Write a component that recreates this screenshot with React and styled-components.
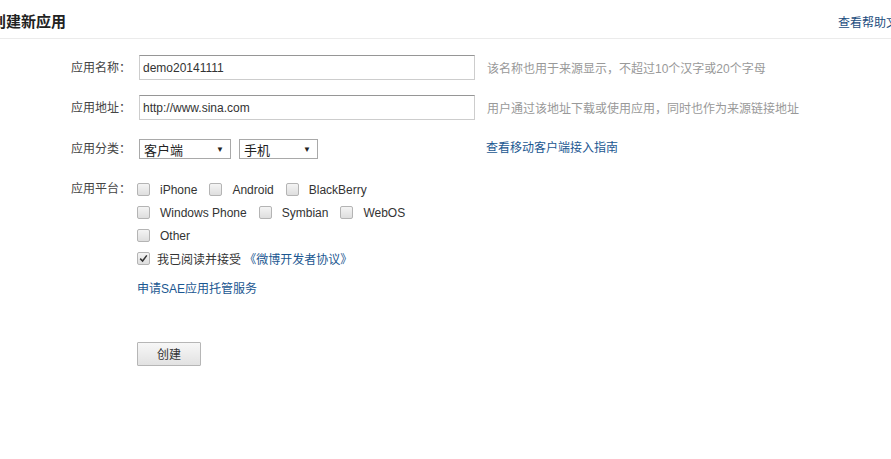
import React from "react";
import styled, { createGlobalStyle } from "styled-components";

const GlobalStyle = createGlobalStyle`
    html, body {
        margin: 0;
        padding: 0;
        background: #fff;
        overflow: hidden;
    }
    body {
        font-family: "Liberation Sans", Arial, "Noto Sans CJK SC", sans-serif;
        font-size: 12px;
        color: #333;
    }
`

const Page = styled.div`
    width: 891px;
    height: 459px;
    overflow: hidden;
`

const Header = styled.div`
    display: flex;
    justify-content: space-between;
    align-items: center;
    height: 38px;
    border-bottom: 1px solid #ebebeb;
    margin-left: -9px;
    margin-right: -19px;
`

const Title = styled.h2`
    margin: 0;
    font-size: 15px;
    line-height: 20px;
    font-weight: bold;
    color: #222;
    padding-top: 5px;
`

const HelpLink = styled.a`
    font-size: 12px;
    line-height: 16px;
    color: #1c4d7e;
    text-decoration: none;
    padding-top: 8px;
`

const Form = styled.div`
    display: flex;
    flex-direction: column;
    padding-left: 71px;
    padding-top: 16px;
`

const Field = styled.div`
    display: flex;
    align-items: ${props => (props.$top ? "flex-start" : "center")};
    margin-top: ${props => props.$gap || 0}px;
    height: ${props => props.$height || "auto"};
`

const Label = styled.div`
    width: 60px;
    margin-right: 6px;
    line-height: ${props => props.$lh || 16}px;
    color: #444;
    white-space: nowrap;
`

const Control = styled.div`
    display: flex;
    align-items: center;
`

const TextInput = styled.div`
    box-sizing: border-box;
    width: 336px;
    height: 25px;
    margin-left: 2px;
    padding-left: 3px;
    display: flex;
    align-items: center;
    border: 1px solid #cdcdcd;
    border-top-color: #969696;
    background: #fff;
    color: #333;
    font-size: 12px;
`

const Hint = styled.span`
    margin-left: 12px;
    color: #999;
    font-size: 12px;
    white-space: nowrap;
`

const Link = styled.a`
    color: #1b5791;
    text-decoration: none;
    white-space: nowrap;
    margin-left: ${props => props.$ml || 0}px;
    margin-top: ${props => props.$mt || 0}px;
`

const SelectBox = styled.div`
    box-sizing: border-box;
    width: ${props => props.$w}px;
    height: 20px;
    margin-left: ${props => props.$ml}px;
    padding: 0 6px 0 4px;
    display: flex;
    align-items: center;
    justify-content: space-between;
    border: 1px solid #a9a9a9;
    background: #fff;
    font-size: 13px;
    color: #222;
    span {
        font-size: 8px;
        color: #222;
    }
`

const CheckGroup = styled.div`
    display: flex;
    flex-direction: column;
`

const CheckLine = styled.div`
    display: flex;
    align-items: center;
    height: 23px;
    margin-top: ${props => props.$gap || 0}px;
`

const Box = styled.span`
    box-sizing: border-box;
    width: 13px;
    height: 13px;
    flex: none;
    border: 1px solid #b4b4b4;
    border-radius: 2px;
    background: linear-gradient(#f4f4f4, #dedede);
    margin-right: ${props => props.$mr || 10}px;
    display: flex;
    align-items: center;
    justify-content: center;
`

const CheckText = styled.span`
    margin-right: 12px;
    color: #333;
    white-space: nowrap;
`

const Button = styled.button`
    box-sizing: border-box;
    width: 64px;
    height: 24px;
    border: 1px solid #b6b6b6;
    border-radius: 1px;
    background: linear-gradient(#f7f7f7, #e2e2e2);
    font-family: inherit;
    font-size: 12px;
    color: #333;
    padding: 0;
`

const Check = ({ label, checked, mr }) => (
    <>
        <Box $mr={mr}>
            {checked && (
                <svg width="9" height="9" viewBox="0 0 9 9">
                    <path d="M1.2 4.6 L3.6 7 L7.8 1.4" fill="none" stroke="#333" strokeWidth="1.5" />
                </svg>
            )}
        </Box>
        {label && <CheckText>{label}</CheckText>}
    </>
)

const App = () => {
    return (
        <Page>
            <GlobalStyle />
            <Header>
                <Title>创建新应用</Title>
                <HelpLink href="#">查看帮助文档</HelpLink>
            </Header>
            <Form>
                <Field $height="25px">
                    <Label>应用名称：</Label>
                    <Control>
                        <TextInput>demo20141111</TextInput>
                        <Hint>该名称也用于来源显示，不超过10个汉字或20个字母</Hint>
                    </Control>
                </Field>
                <Field $gap={15} $height="25px">
                    <Label>应用地址：</Label>
                    <Control>
                        <TextInput>http://www.sina.com</TextInput>
                        <Hint>用户通过该地址下载或使用应用，同时也作为来源链接地址</Hint>
                    </Control>
                </Field>
                <Field $gap={19} $height="20px">
                    <Label>应用分类：</Label>
                    <Control>
                        <SelectBox $w={92} $ml={2}>客户端<span>▼</span></SelectBox>
                        <SelectBox $w={79} $ml={8}>手机<span>▼</span></SelectBox>
                        <Link href="#" $ml={168} $mt={-6}>查看移动客户端接入指南</Link>
                    </Control>
                </Field>
                <Field $gap={19} $top>
                    <Label $lh={23}>应用平台：</Label>
                    <CheckGroup>
                        <CheckLine>
                            <Check label="iPhone" />
                            <Check label="Android" />
                            <Check label="BlackBerry" />
                        </CheckLine>
                        <CheckLine>
                            <Check label="Windows Phone" />
                            <Check label="Symbian" />
                            <Check label="WebOS" />
                        </CheckLine>
                        <CheckLine>
                            <Check label="Other" />
                        </CheckLine>
                        <CheckLine>
                            <Check checked mr={7} />
                            <CheckText>
                                我已阅读并接受 <Link href="#">《微博开发者协议》</Link>
                            </CheckText>
                        </CheckLine>
                        <CheckLine $gap={6}>
                            <Link href="#">申请SAE应用托管服务</Link>
                        </CheckLine>
                        <CheckLine $gap={43}>
                            <Button>创建</Button>
                        </CheckLine>
                    </CheckGroup>
                </Field>
            </Form>
        </Page>
    );
};

export default App;
